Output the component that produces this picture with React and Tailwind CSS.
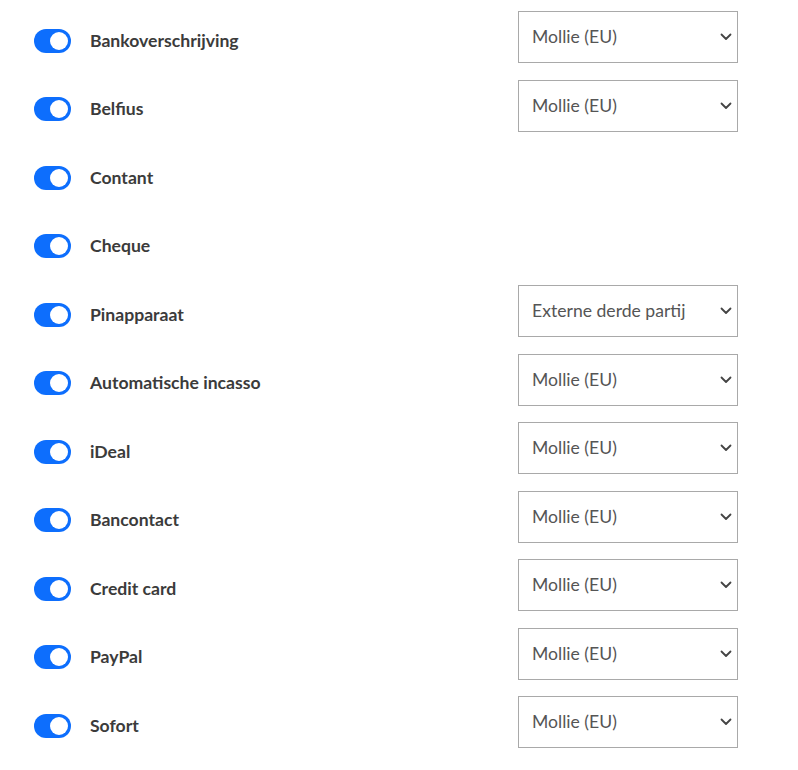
import React, { useState } from 'react';

const methods = [
  { name: 'Bankoverschrijving', provider: 'Mollie (EU)' },
  { name: 'Belfius', provider: 'Mollie (EU)' },
  { name: 'Contant', provider: null },
  { name: 'Cheque', provider: null },
  { name: 'Pinapparaat', provider: 'Externe derde partij' },
  { name: 'Automatische incasso', provider: 'Mollie (EU)' },
  { name: 'iDeal', provider: 'Mollie (EU)' },
  { name: 'Bancontact', provider: 'Mollie (EU)' },
  { name: 'Credit card', provider: 'Mollie (EU)' },
  { name: 'PayPal', provider: 'Mollie (EU)' },
  { name: 'Sofort', provider: 'Mollie (EU)' },
];

const Toggle = ({ on, onClick }) => (
  <button
    onClick={onClick}
    className={`flex items-center w-[37px] h-[24px] rounded-full px-[3px] ${
      on ? 'bg-[#0d6efd] justify-end' : 'bg-gray-300 justify-start'
    }`}
  >
    <span className="block w-[18px] h-[18px] rounded-full bg-white" />
  </button>
);

const ProviderSelect = ({ value }) => (
  <div className="flex items-center justify-between w-[220px] h-[52px] border border-[#a9a9a9] bg-white pl-[13px] pr-[5px]">
    <span className="text-[17.6px] text-[#555] leading-none">{value}</span>
    <svg width="12" height="8" viewBox="0 0 12 8" fill="none">
      <path d="M1.5 1.5L6 6L10.5 1.5" stroke="#444" strokeWidth="1.8" strokeLinecap="round" strokeLinejoin="round" />
    </svg>
  </div>
);

export default function App() {
  const [enabled, setEnabled] = useState(methods.map(() => true));

  const flip = (i) => setEnabled(enabled.map((v, j) => (j === i ? !v : v)));

  return (
    <div className="w-[798px] h-[770px] bg-white pt-[11px] pl-[34px]" style={{ fontFamily: 'Lato, "Open Sans", sans-serif' }}>
      {methods.map((m, i) => (
        <div key={m.name} className="flex items-start h-[68.5px]">
          <div className="flex items-center h-[25px] mt-[17px] w-[484px]">
            <Toggle on={enabled[i]} onClick={() => flip(i)} />
            <span className="ml-[19px] text-[17.6px] font-bold text-[#3b3b3b] leading-none">{m.name}</span>
          </div>
          {m.provider && <ProviderSelect value={m.provider} />}
        </div>
      ))}
    </div>
  );
}
